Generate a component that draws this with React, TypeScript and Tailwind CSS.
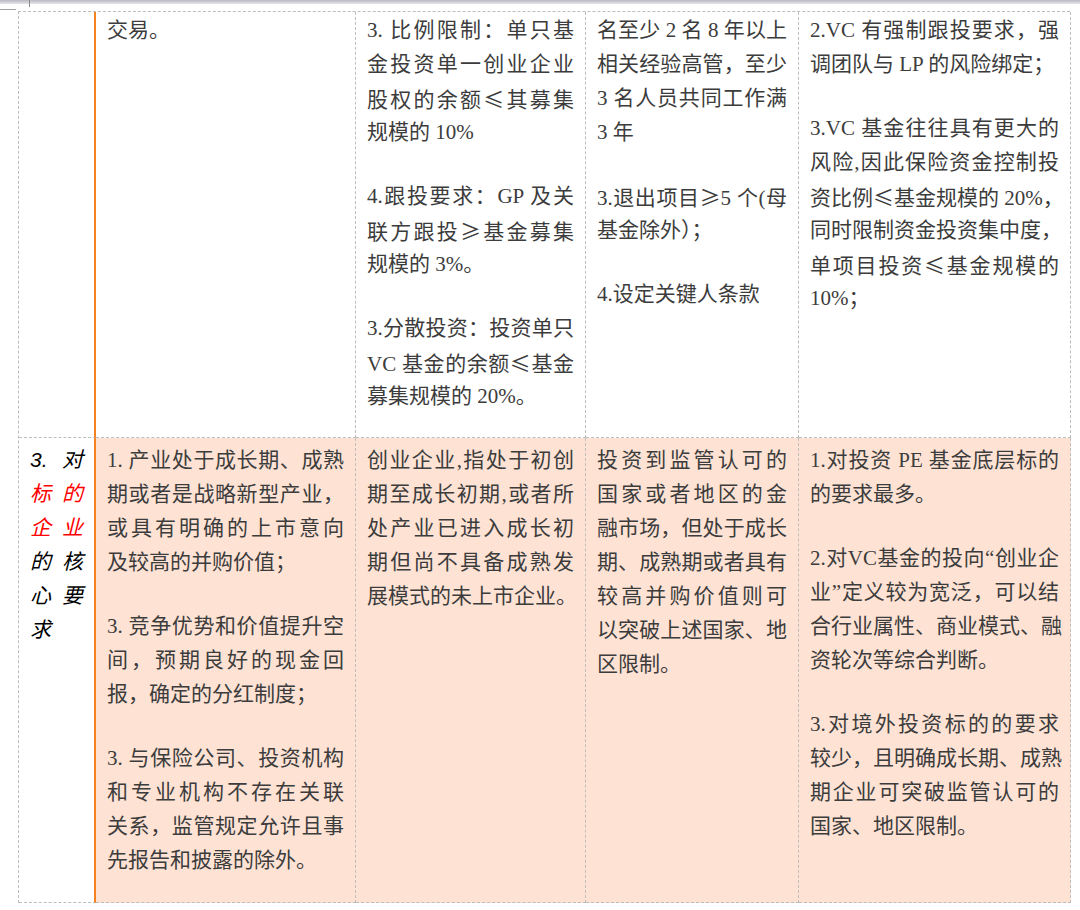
import React from 'react'

type Cell = string[][]

const row1: Cell[] = [
  [['交易。']],
  [
    ['3. 比例限制：单只基', '金投资单一创业企业', '股权的余额≤其募集', '规模的 10%'],
    ['4.跟投要求：GP 及关', '联方跟投≥基金募集', '规模的 3%。'],
    ['3.分散投资：投资单只', 'VC 基金的余额≤基金', '募集规模的 20%。'],
  ],
  [
    ['名至少 2 名 8 年以上', '相关经验高管，至少', '3 名人员共同工作满', '3 年'],
    ['3.退出项目≥5 个(母', '基金除外）；'],
    ['4.设定关键人条款'],
  ],
  [
    ['2.VC 有强制跟投要求，强', '调团队与 LP 的风险绑定；'],
    [
      '3.VC 基金往往具有更大的',
      '风险,因此保险资金控制投',
      '资比例≤基金规模的 20%，',
      '同时限制资金投资集中度，',
      '单项目投资≤基金规模的',
      '10%；',
    ],
  ],
]

const row2: Cell[] = [
  [
    ['1. 产业处于成长期、成熟', '期或者是战略新型产业，', '或具有明确的上市意向', '及较高的并购价值；'],
    ['3. 竞争优势和价值提升空', '间，预期良好的现金回', '报，确定的分红制度；'],
    ['3. 与保险公司、投资机构', '和专业机构不存在关联', '关系，监管规定允许且事', '先报告和披露的除外。'],
  ],
  [['创业企业,指处于初创', '期至成长初期,或者所', '处产业已进入成长初', '期但尚不具备成熟发', '展模式的未上市企业。']],
  [['投资到监管认可的', '国家或者地区的金', '融市场，但处于成长', '期、成熟期或者具有', '较高并购价值则可', '以突破上述国家、地', '区限制。']],
  [
    ['1.对投资 PE 基金底层标的', '的要求最多。'],
    ['2.对VC基金的投向“创业企', '业”定义较为宽泛，可以结', '合行业属性、商业模式、融', '资轮次等综合判断。'],
    ['3.对境外投资标的的要求', '较少，且明确成长期、成熟', '期企业可突破监管认可的', '国家、地区限制。'],
  ],
]

const leftLabel: { text: string; red?: boolean }[] = [
  { text: '3. 对' },
  { text: '标的', red: true },
  { text: '企业', red: true },
  { text: '的核' },
  { text: '心要' },
  { text: '求' },
]

// ≤ / ≥ look full-width in the source, so give them the CJK face
function Rich({ text }: { text: string }) {
  const parts = text.split(/([≤≥])/)
  return (
    <>
      {parts.map((p, i) =>
        p === '≤' || p === '≥' ? (
          <span key={i} className="[font-family:'Noto_Sans_CJK_SC',sans-serif]">
            {p}
          </span>
        ) : (
          <React.Fragment key={i}>{p}</React.Fragment>
        )
      )}
    </>
  )
}

function Para({ lines, first }: { lines: string[]; first: boolean }) {
  return (
    <div className={first ? '' : 'mt-[30px]'}>
      {lines.map((l, i) => (
        <div
          key={i}
          className={`h-[34px] whitespace-nowrap ${i < lines.length - 1 ? '[text-align-last:justify]' : ''}`}
        >
          <Rich text={l} />
        </div>
      ))}
    </div>
  )
}

function TextCell({ cell, top, peach }: { cell: Cell; top: string; peach?: boolean }) {
  return (
    <div
      className={`border-r border-b border-dashed border-[#bdbdbd] px-[11px] ${top} ${peach ? 'bg-[#fee3d5]' : ''}`}
    >
      {cell.map((p, i) => (
        <Para key={i} lines={p} first={i === 0} />
      ))}
    </div>
  )
}

export default function App() {
  return (
    <div className="w-[1080px] h-[910px] bg-white overflow-hidden text-[21px] leading-[34px] text-[#3c3c3c] [font-family:'Liberation_Serif','Noto_Sans_CJK_SC',serif]">
      {/* ruler strip */}
      <div className="relative h-[11px]">
        <div className="h-[4px] bg-gradient-to-b from-[#b9b9c2] to-[#e6e6ea]" />
        <span className="absolute left-[29px] top-0 h-[7px] w-px bg-[#8a8a8a]" />
        <span className="absolute left-0 top-[9px] h-px w-[16px] bg-[#a0a0a0]" />
      </div>

      <div className="ml-[18px] grid w-[1052px] grid-cols-[77px_260px_230px_213px_272px] grid-rows-[426px_465px] border-l border-t border-dashed border-[#bdbdbd]">
        {/* row 1 */}
        <div className="border-b border-r-2 border-dashed border-b-[#bdbdbd] border-r-[#f58220] [border-right-style:solid]" />
        {row1.map((c, i) => (
          <TextCell key={i} cell={c} top="pt-[1px]" />
        ))}

        {/* row 2 */}
        <div className="border-b border-r-2 border-dashed border-b-[#bdbdbd] border-r-[#f58220] [border-right-style:solid] pl-[11px] pr-[11px] pt-[5px] italic text-black [font-family:'Liberation_Sans','Noto_Sans_CJK_SC',sans-serif]">
          {leftLabel.map((l, i) => (
            <div
              key={i}
              className={`h-[34px] whitespace-nowrap ${l.red ? 'text-[#ff0000]' : ''} ${
                i < leftLabel.length - 1 ? '[text-align-last:justify]' : ''
              }`}
            >
              {l.text}
            </div>
          ))}
        </div>
        {row2.map((c, i) => (
          <TextCell key={i} cell={c} top="pt-[5px]" peach />
        ))}
      </div>
    </div>
  )
}
